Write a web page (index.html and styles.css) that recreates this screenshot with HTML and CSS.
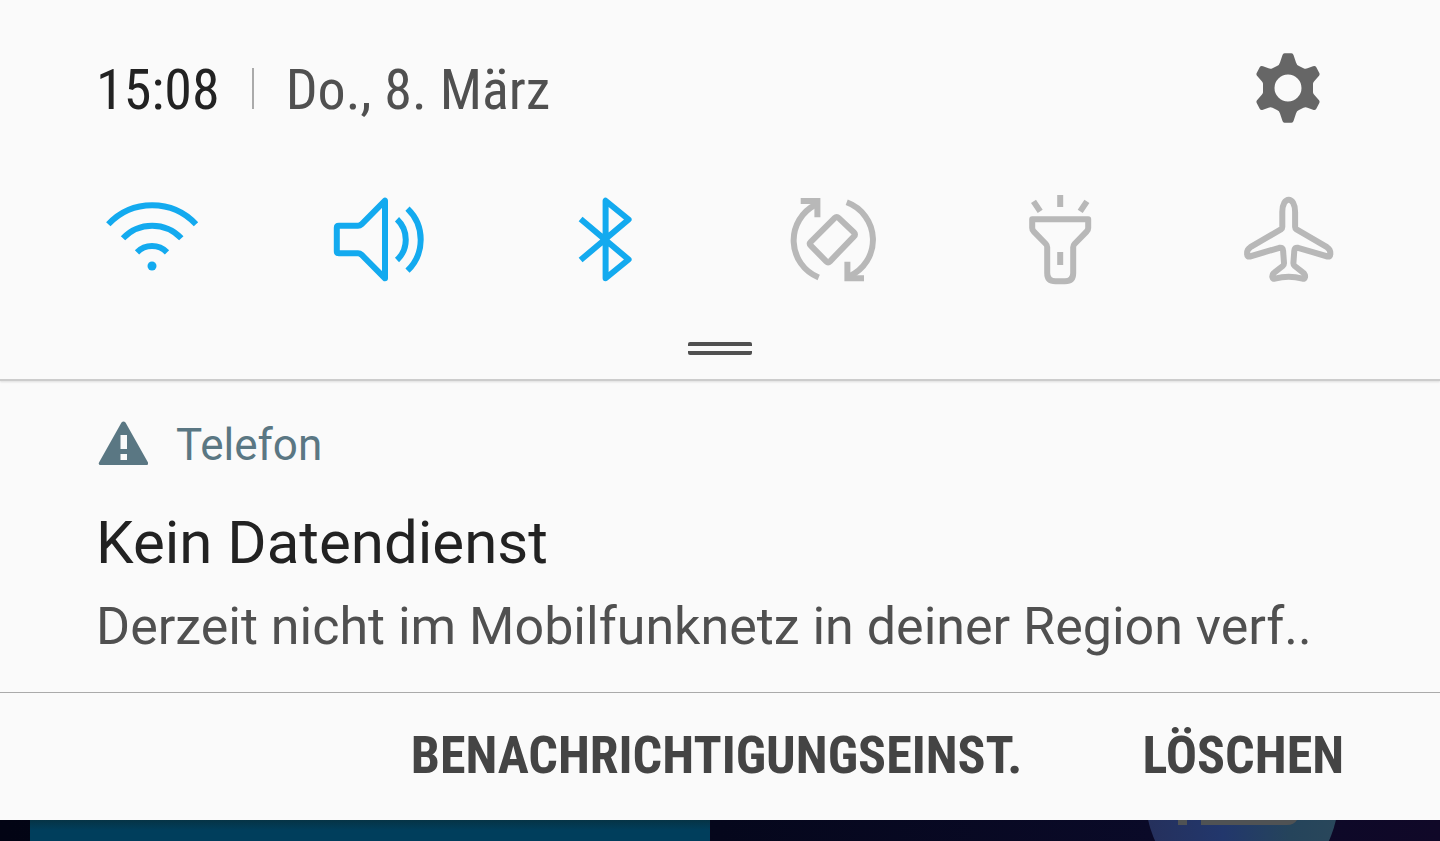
FILE: index.html
```
<!DOCTYPE html>
<html lang="de">

<head>
    <meta charset="utf-8">
    <meta name="viewport" content="width=device-width,initial-scale=1">
    <title>Benachrichtigungen</title>
    <link rel="stylesheet" href="styles.css">
</head>

<body>
    <header class="quick-panel">
        <div class="top-bar">
            <time class="clock">15:08</time>
            <span class="divider"></span>
            <span class="date">Do., 8. März</span>
            <button class="settings" type="button" aria-label="Einstellungen">
                <svg width="80" height="80" viewBox="0 0 80 80">
                    <path fill="#666" fill-rule="evenodd" d="M37 5.300H43.500Q45 5.300 45.500 7L48 14.500Q48.700 17.200 51 18L55.500 20.200Q57.500 21.200 59.500 20.300L65 18.300Q67.200 17.500 68.300 19.300L71.300 25Q72 26.500 71 27.800L66 33.500Q64.800 34.800 65 36.500V43.500Q64.800 45.200 66 46.500L71 52.200Q72 53.500 71.300 55L68.300 60.700Q67.200 62.500 65 61.700L59.500 59.700Q57.500 58.800 55.500 59.800L51 62Q48.700 62.800 48 65.500L45.500 73Q45 74.700 43.500 74.700H36.500Q35 74.700 34.500 73L32 65.500Q31.300 62.800 29 62L24.500 59.800Q22.500 58.800 20.500 59.700L15 61.700Q12.800 62.500 11.700 60.700L8.700 55Q8 53.500 9 52.200L14 46.500Q15.200 45.200 15 43.500V36.500Q15.200 34.800 14 33.500L9 27.800Q8 26.500 8.700 25L11.700 19.300Q12.800 17.500 15 18.300L20.500 20.300Q22.500 21.200 24.500 20.200L29 18Q31.300 17.200 32 14.500L34.500 7Q35 5.300 36.500 5.300ZM40 26.500A13.500 13.500 0 1 0 40 53.500A13.500 13.500 0 1 0 40 26.500Z" />
                </svg>
            </button>
        </div>

        <div class="toggles">
            <button class="toggle active" type="button" aria-label="WLAN" aria-pressed="true">
                <svg viewBox="0 0 112 112">
                    <path d="M12.300 40.300A60 60 0 0 1 100 40.300M27 54.300A40 40 0 0 1 85.300 54.300M41 68.300A21 21 0 0 1 71 68.300" />
                    <circle class="dot" cx="56" cy="82" r="4.500" />
                </svg>
            </button>
            <button class="toggle active" type="button" aria-label="Ton" aria-pressed="true">
                <svg viewBox="0 0 112 112">
                    <path d="M15.800 41.700H35Q37 41.700 38.500 40.300L62 16.700V94.300L38.500 70.700Q37 69.300 35 69.300H15.800Q13.800 69.300 13.800 67.300V43.700Q13.800 41.700 15.800 41.700Z" />
                    <path d="M74 35.300A28 28 0 0 1 74 76M84.500 24.700A43 43 0 0 1 84.500 86.700" />
                </svg>
            </button>
            <button class="toggle active" type="button" aria-label="Bluetooth" aria-pressed="true">
                <svg viewBox="0 0 112 112">
                    <path d="M30.600 76L78.600 35.500L55.600 16.700V94.300L78.600 75.500L30.600 35" />
                </svg>
            </button>
            <button class="toggle" type="button" aria-label="Automatisch drehen" aria-pressed="false">
                <svg viewBox="1 0 112 112">
                    <path d="M41.700 93.500A40 40 0 0 1 39 20.500M69.700 18.300A40 40 0 0 1 72 92.500" />
                    <path class="sharp" d="M23.700 17H40.400V33.300M70.400 77.700V94.300H87" />
                    <path d="M57.800 33.900Q59.700 32 61.600 33.900L77 48.500Q79 50.400 77 52.300L53 77.300Q51.100 79.200 49.200 77.300L33.800 61.700Q31.900 59.800 33.800 57.900Z" />
                </svg>
            </button>
            <button class="toggle" type="button" aria-label="Taschenlampe" aria-pressed="false">
                <svg viewBox="0 0 112 112">
                    <path d="M27.200 35.300H83.200V44Q83.200 46 81.800 47.300L69.500 60Q68.200 61.300 68.200 63.300V89Q68.200 97.300 60 97.300H50.500Q42.200 97.300 42.200 89V63.300Q42.200 61.300 40.900 60L28.600 47.300Q27.200 46 27.200 44Z" />
                    <path d="M55.200 68V81M55.200 11V23M28.500 17.300L35.200 27.300M81.900 17.300L75.200 27.300" />
                </svg>
            </button>
            <button class="toggle" type="button" aria-label="Flugmodus" aria-pressed="false">
                <svg viewBox="0 0 112 112">
                    <path d="M50.300 28C50.300 20 53.500 15.700 56.700 15.700S63.100 20 63.100 28V43Q63.100 44.500 64.500 45.400L95 63.200Q98.500 65.500 98.300 69.500V70.500Q98.200 73 95.500 72.500L66 63.800Q62.500 63.200 62.300 66.700L61.400 79Q61.300 80.800 62.700 82L70.800 88.300Q73.500 90.300 73 93.200Q72.600 95.200 70.500 94.600Q56.700 91 42.900 94.600Q40.800 95.200 40.400 93.200Q39.900 90.300 42.600 88.300L50.700 82Q52.100 80.800 52 79L51.100 66.700Q50.900 63.200 47.400 63.800L17.900 72.500Q15.200 73 15.100 70.500V69.500Q14.900 65.500 18.400 63.200L48.900 45.400Q50.300 44.500 50.300 43Z" />
                </svg>
            </button>
        </div>

        <div class="handle"></div>
    </header>

    <main class="notification">
        <div class="content">
            <div class="app">
                <svg width="52" height="52" viewBox="0 0 52 52">
                    <path fill="#5a7783" fill-rule="evenodd" d="M25.500 3.500Q27.500 1.500 29.500 3.500L52 43.500Q53 46 50.500 46H4.500Q2 46 3 43.500ZM24.500 16V30H31V16ZM24.500 35V41H31V35Z" />
                </svg>
                <span>Telefon</span>
            </div>
            <h1 class="title">Kein Datendienst</h1>
            <p class="message">Derzeit nicht im Mobilfunknetz in deiner Region verf..</p>
        </div>
        <div class="actions">
            <button type="button">BENACHRICHTIGUNGSEINST.</button>
            <button type="button">LÖSCHEN</button>
        </div>
    </main>

    <div class="wallpaper">
        <div class="tile"></div>
        <svg class="ball" width="192" height="21" viewBox="0 0 192 21">
            <defs>
                <linearGradient id="ball">
                    <stop offset="0" stop-color="#25305c" />
                    <stop offset="0.400" stop-color="#22376c" />
                    <stop offset="0.750" stop-color="#25445b" />
                    <stop offset="1" stop-color="#29475b" />
                </linearGradient>
            </defs>
            <circle cx="96" cy="-20" r="96" fill="url(#ball)" />
            <path fill="#4f5254" d="M32 0H41V5H32ZM55 0H151Q148 5 141 5H55Z" />
        </svg>
    </div>
</body>

</html>
```
FILE: styles.css
```
* {
    margin: 0;
    padding: 0;
    box-sizing: border-box;
}

body {
    display: flex;
    flex-direction: column;
    min-height: 100vh;
    font-family: Roboto, sans-serif;
    background: #fafafa;
    color: #505050;
    overflow-x: hidden;
}

button {
    border: none;
    background: none;
    color: inherit;
    cursor: pointer;
}

svg {
    display: block;
}

.quick-panel {
    padding: 48px 96px 24px;
    border-bottom: 2px solid #ccc;
    box-shadow: 0 1px 2px #ddd;
}

.top-bar {
    display: flex;
    align-items: center;
    height: 80px;
    font-family: "Roboto Condensed", Roboto, sans-serif;
    font-size: 56px;
    line-height: 80px;
    white-space: nowrap;
}

.clock,
.date {
    padding-top: 4px;
}

.clock {
    color: #222;
}

.divider {
    width: 2px;
    height: 41px;
    margin: 0 32px;
    background: #aaa;
}

.settings {
    margin-left: auto;
    margin-right: 16px;
}

.toggles {
    display: flex;
    justify-content: space-between;
    margin-top: 56px;
}

.toggle {
    width: 112px;
    color: #b8b8b8;
}

.toggle.active {
    color: #13aaef;
}

.toggle svg {
    width: 100%;
    fill: none;
    stroke: currentColor;
    stroke-width: 6px;
    stroke-linejoin: round;
}

.toggle .sharp {
    stroke-linejoin: miter;
}

.toggle .dot {
    fill: currentColor;
    stroke: none;
}

.handle {
    width: 64px;
    height: 13px;
    margin: 46px auto 0;
    border-top: 4px solid #505050;
    border-bottom: 4px solid #505050;
    border-radius: 2px;
}

.content {
    padding: 32px 96px 23px;
}

.app {
    display: flex;
    align-items: center;
    gap: 28px;
    height: 64px;
    font-size: 44px;
    color: #5a7783;
}

.title {
    margin-top: 24px;
    font-size: 60px;
    font-weight: 400;
    line-height: 84px;
    color: #222;
}

.message {
    font-size: 52px;
    line-height: 84px;
    white-space: nowrap;
}

.actions {
    display: flex;
    justify-content: flex-end;
    gap: 120px;
    padding: 23px 96px 24px;
    border-top: 1px solid #aaa;
}

.actions button {
    font-family: "Roboto Condensed", Roboto, sans-serif;
    font-size: 52px;
    font-weight: 700;
    line-height: 80px;
    color: #444;
}

.wallpaper {
    display: flex;
    flex: 1;
    justify-content: space-between;
    min-height: 21px;
    padding: 0 102px 0 30px;
    background: linear-gradient(90deg, #020414 0%, #05071c 50%, #0a0a28 80%, #100828 100%);
}

.tile {
    width: 52%;
    background: linear-gradient(#063345, #003e5c 50%);
}
```
